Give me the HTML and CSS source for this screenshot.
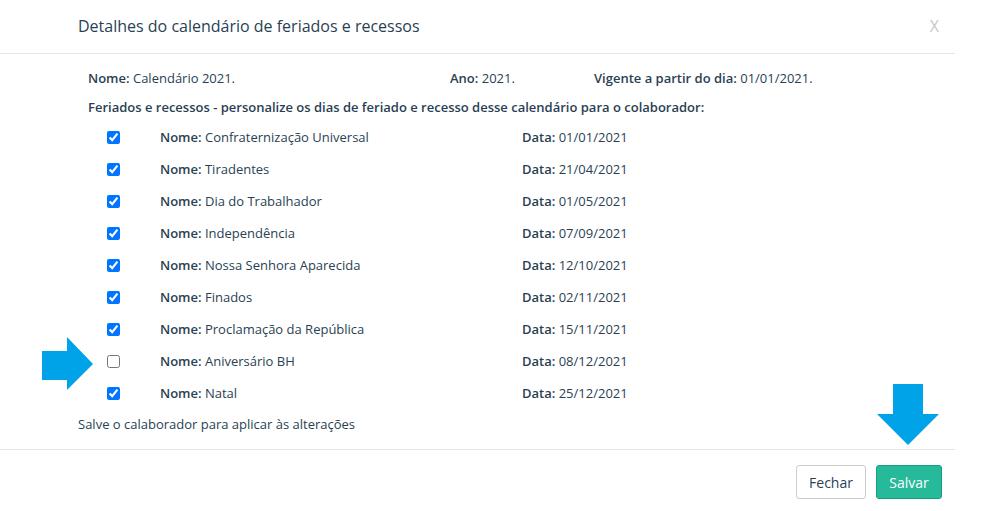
FILE: index.html
```html
<!DOCTYPE html>
<html lang="pt-BR">
<head>
<meta charset="utf-8">
<title>Detalhes do calendário</title>
<link rel="stylesheet" href="styles.css">
</head>
<body>
<div class="modal">
  <div class="modal-header">
    <h4 class="modal-title">Detalhes do calendário de feriados e recessos</h4>
    <span class="close">X</span>
  </div>
  <div class="modal-body">
    <div class="info">
      <div><b>Nome:</b> Calendário 2021.</div>
      <div><b>Ano:</b> 2021.</div>
      <div><b>Vigente a partir do dia:</b> 01/01/2021.</div>
    </div>
    <div class="subtitle">Feriados e recessos - personalize os dias de feriado e recesso desse calendário para o colaborador:</div>
    <div class="list">
      <div class="row"><span class="chk"><input type="checkbox" checked></span><span class="name"><b>Nome:</b> Confraternização Universal</span><span class="date"><b>Data:</b> 01/01/2021</span></div>
      <div class="row"><span class="chk"><input type="checkbox" checked></span><span class="name"><b>Nome:</b> Tiradentes</span><span class="date"><b>Data:</b> 21/04/2021</span></div>
      <div class="row"><span class="chk"><input type="checkbox" checked></span><span class="name"><b>Nome:</b> Dia do Trabalhador</span><span class="date"><b>Data:</b> 01/05/2021</span></div>
      <div class="row"><span class="chk"><input type="checkbox" checked></span><span class="name"><b>Nome:</b> Independência</span><span class="date"><b>Data:</b> 07/09/2021</span></div>
      <div class="row"><span class="chk"><input type="checkbox" checked></span><span class="name"><b>Nome:</b> Nossa Senhora Aparecida</span><span class="date"><b>Data:</b> 12/10/2021</span></div>
      <div class="row"><span class="chk"><input type="checkbox" checked></span><span class="name"><b>Nome:</b> Finados</span><span class="date"><b>Data:</b> 02/11/2021</span></div>
      <div class="row"><span class="chk"><input type="checkbox" checked></span><span class="name"><b>Nome:</b> Proclamação da República</span><span class="date"><b>Data:</b> 15/11/2021</span></div>
      <div class="row"><span class="chk"><input type="checkbox"></span><span class="name"><b>Nome:</b> Aniversário BH</span><span class="date"><b>Data:</b> 08/12/2021</span></div>
      <div class="row"><span class="chk"><input type="checkbox" checked></span><span class="name"><b>Nome:</b> Natal</span><span class="date"><b>Data:</b> 25/12/2021</span></div>
    </div>
    <div class="note">Salve o calaborador para aplicar às alterações</div>
  </div>
  <div class="modal-footer">
    <button class="btn btn-default">Fechar</button>
    <button class="btn btn-success">Salvar</button>
  </div>
</div>
<svg class="arrow arrow-right" width="52" height="54" viewBox="0 0 52 54"><polygon points="0,14 25,14 25,0 51,27 25,53 25,43 0,43" fill="#00a2e8"/></svg>
<svg class="arrow arrow-down" width="62" height="62" viewBox="0 0 62 62"><polygon points="16,0 46,0 46,30 62,30 31,61 0,30 16,30" fill="#00a2e8"/></svg>
</body>
</html>
```
FILE: styles.css
```css
html, body {
  margin: 0;
  padding: 0;
  background: #fff;
}
body {
  font-family: "Open Sans", "DejaVu Sans", sans-serif;
  font-size: 13px;
  color: #2a3f54;
  width: 985px;
  height: 511px;
  position: relative;
  overflow: hidden;
}
b { font-weight: 600; }
.modal {
  width: 955px;
  background: #fff;
}
.modal-header {
  height: 53px;
  border-bottom: 1px solid #e5e5e5;
  display: flex;
  align-items: center;
  justify-content: space-between;
  padding: 0 16px 0 78px;
  box-sizing: content-box;
}
.modal-title {
  margin: 0;
  font-size: 16px;
  font-weight: 400;
  color: #2a3f54;
  line-height: 20px;
  padding-bottom: 2px;
}
.close {
  font-size: 16px;
  color: #c8c8c8;
  line-height: 20px;
  padding-bottom: 2px;
}
.modal-body {
  padding: 14px 0 15px 0;
}
.info {
  display: grid;
  grid-template-columns: 362px 144px auto;
  padding-left: 88px;
  line-height: 20px;
}
.subtitle {
  padding-left: 88px;
  margin-top: 9px;
  line-height: 20px;
  font-weight: 600;
}
.list {
  margin-top: 4px;
}
.row {
  display: flex;
  align-items: center;
  height: 32px;
}
.chk {
  width: 53px;
  padding-left: 107px;
  display: flex;
  align-items: center;
}
.chk input {
  margin: 0;
  width: 13px;
  height: 13px;
}
.name {
  width: 362px;
}
.note {
  padding-left: 78px;
  margin-top: 5px;
  line-height: 20px;
}
.modal-footer {
  border-top: 1px solid #e5e5e5;
  display: flex;
  justify-content: flex-end;
  gap: 10px;
  padding: 15px 13px 12px 0;
}
.btn {
  font-family: "Open Sans", "DejaVu Sans", sans-serif;
  font-size: 14px;
  height: 34px;
  padding: 0 12px;
  border-radius: 3px;
  cursor: pointer;
}
.btn-default {
  background: #fff;
  border: 1px solid #ccc;
  color: #2a3f54;
  width: 70px;
}
.btn-success {
  background: #26b99a;
  border: 1px solid #169f85;
  color: #fff;
  width: 66px;
}
.arrow {
  position: absolute;
}
.arrow-right {
  left: 42px;
  top: 337px;
}
.arrow-down {
  left: 877px;
  top: 384px;
}
```
